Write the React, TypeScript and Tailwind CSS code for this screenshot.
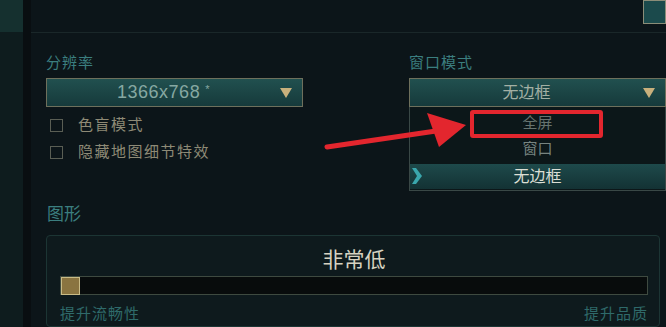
import React from "react";

const Caret = () => (
  <svg width="12" height="10" viewBox="0 0 12 10" className="shrink-0">
    <polygon points="0,0 12,0 6,10" fill="#c8b07c" />
  </svg>
);

const Label = ({ text }: { text: string }) => (
  <div className="h-[20px] leading-[20px] text-[15px] tracking-[1px] text-[#3b7e7f]">{text}</div>
);

const Select = ({ value, big }: { value: React.ReactNode; big?: boolean }) => (
  <div className="relative h-[29px] border border-[#6e705c] bg-gradient-to-b from-[#21504f] to-[#163a3b] flex items-center pr-[10px]">
    <div className={"flex-1 text-center " + (big ? "text-[18px] tracking-[0.5px] text-[#86a8a2]" : "text-[16px] text-[#a3b0a4]")}>{value}</div>
    <Caret />
  </div>
);

const Check = ({ text }: { text: string }) => (
  <div className="h-[27px] flex items-center pl-[4px]">
    <div className="w-[13px] h-[13px] border border-[#5a5e54]" />
    <span className="ml-[15px] text-[15px] tracking-[1.5px] text-[#8e8a76]">{text}</span>
  </div>
);

export default function App() {
  return (
    <div className="relative w-[666px] h-[327px] overflow-hidden flex bg-[#0c1519] font-['Liberation_Sans','Noto_Sans_CJK_SC',sans-serif]">
      {/* side rail */}
      <div className="w-[23px] flex flex-col">
        <div className="h-[32px] bg-[#15302f]" />
        <div className="flex-1 bg-[#0e1c1e]" />
      </div>
      <div className="w-[8px] bg-[#090e11]" />

      <div className="flex-1 flex flex-col">
        <div className="h-[33px] shrink-0 border-b border-[#1a2729] flex justify-end">
          <div className="w-[23px] h-[24px] border border-[#8b8d78] bg-[#1b4a4c]" />
        </div>

        <div className="flex pl-[15px] pt-[20px]">
          <div className="w-[257px] flex flex-col">
            <Label text="分辨率" />
            <div className="mt-[5px]">
              <Select
                big
                value={
                  <span>
                    1366x768
                    <span className="relative top-[-5px] ml-[5px] text-[11px]">*</span>
                  </span>
                }
              />
            </div>
            <div className="mt-[5px]">
              <Check text="色盲模式" />
              <Check text="隐藏地图细节特效" />
            </div>
          </div>

          <div className="ml-[106px] w-[257px] flex flex-col">
            <Label text="窗口模式" />
            <div className="mt-[5px] relative">
              <Select value="无边框" />
              <div className="absolute left-0 right-0 top-full h-[84px] border border-t-0 border-[#3a4846] bg-[#0c1719] pt-[3px] flex flex-col">
                <div className="h-[26px] flex items-center justify-center text-[15px] text-[#66736f]">全屏</div>
                <div className="h-[26px] flex items-center justify-center text-[15px] text-[#778480]">窗口</div>
                <div className="mt-[2px] h-[25px] relative flex items-center justify-center bg-gradient-to-b from-[#1e4a4b] to-[#133234] text-[16px] text-[#dcdfd5]">
                  <svg width="10" height="16" viewBox="0 0 10 16" className="absolute left-[2px] top-[4px]">
                    <polygon points="0,0 4,0 10,8 4,16 0,16 5,8" fill="#3aa7ad" />
                  </svg>
                  无边框
                </div>
              </div>
            </div>
          </div>
        </div>

        <div className="mt-[38px] pl-[16px] h-[22px] leading-[22px] text-[17px] text-[#3b7e7f]">图形</div>

        <div className="mt-[9px] ml-[15px] mr-[6px] flex-1 border border-[#1c3534] rounded-[4px] bg-[#0e1a1d] pl-[13px] pr-[11px] pt-[12px]">
          <div className="h-[24px] leading-[24px] text-center text-[21px] text-[#d6d2c1]">非常低</div>
          <div className="mt-[4px] h-[19px] border border-[#3e4a40] bg-[#080c0c] flex items-center">
            <div className="w-[19px] h-[18px] border border-[#c9bb86] bg-[#8a7440]" />
          </div>
          <div className="mt-[8px] flex justify-between text-[15px] tracking-[1px] text-[#2f6a6a]">
            <span>提升流畅性</span>
            <span>提升品质</span>
          </div>
        </div>
      </div>

      {/* red annotation */}
      <div className="absolute left-[470px] top-[110px] w-[133px] h-[28px] border-4 border-[#e3262e] rounded-[3px]" />
      <svg className="absolute inset-0 pointer-events-none" width="666" height="327" viewBox="0 0 666 327">
        <line x1="327" y1="147" x2="436" y2="131" stroke="#e3262e" strokeWidth="5" strokeLinecap="round" />
        <polygon points="466,125 427,113 439,147" fill="#e3262e" />
      </svg>
    </div>
  );
}
